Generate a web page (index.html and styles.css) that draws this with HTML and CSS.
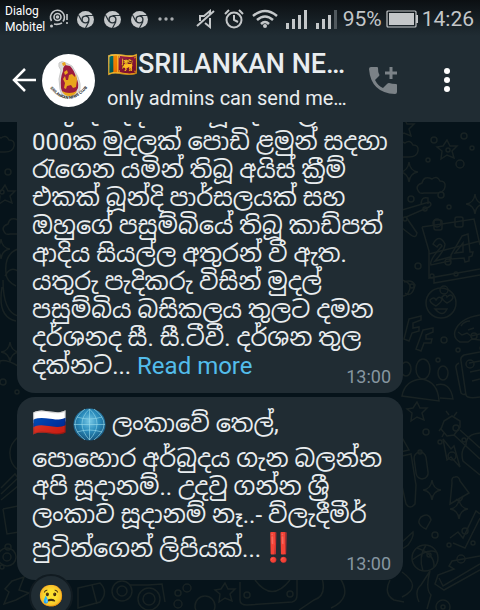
FILE: index.html
```html
<!DOCTYPE html>
<html lang="si">

<head>
  <meta charset="UTF-8" />
  <meta name="viewport" content="width=device-width, initial-scale=1.0" />
  <title>SRILANKAN NEWS</title>
  <link rel="stylesheet" href="styles.css">
</head>

<body>
  <header class="header">
    <div class="status">
      <div class="carrier">Dialog<br>Mobitel</div>
      <div class="notices">
        <svg width="20" height="20" viewBox="0 0 20 20" fill="none" stroke="#c4c7c9" stroke-width="1.600">
          <path d="M2.500 12A7 7 0 1 1 14 12.500M5 15q4 1 8-1" />
          <circle cx="8.500" cy="8" r="3.500" />
          <circle cx="8.500" cy="8" r="1" fill="#c4c7c9" />
          <path d="M18 5v6M18 13v2" />
          <circle cx="2.500" cy="17" r="1.500" fill="#c4c7c9" stroke="none" />
        </svg>
        <svg width="17" height="17" viewBox="0 0 17 17"><use href="#chrome" /></svg>
        <svg width="17" height="17" viewBox="0 0 17 17"><use href="#chrome" /></svg>
        <svg width="17" height="17" viewBox="0 0 17 17"><use href="#chrome" /></svg>
        <svg width="16" height="4" viewBox="0 0 16 4" fill="#a9adb0">
          <circle cx="2" cy="2" r="1.700" /><circle cx="8" cy="2" r="1.700" /><circle cx="14" cy="2" r="1.700" />
        </svg>
      </div>
      <div class="signals">
        <svg width="20" height="20" viewBox="0 0 20 20" fill="none" stroke="#c4c7c9" stroke-width="2">
          <path d="M1 17L18 2M4 12V7h4l6-5v3M14 9v9l-5-4" />
        </svg>
        <svg width="20" height="20" viewBox="0 0 20 20" fill="none" stroke="#c4c7c9" stroke-width="2">
          <circle cx="10" cy="11" r="7.500" />
          <path d="M10 6v5l4 2M1 5l4-4M19 5l-4-4" />
        </svg>
        <svg width="26" height="20" viewBox="0 0 26 20" fill="none" stroke="#c4c7c9" stroke-width="2.500">
          <path d="M1 7q12-10 24 0M5 11q8-7 16 0M9 15q4-4 8 0" />
          <circle cx="13" cy="17" r="2" fill="#c4c7c9" stroke="none" />
        </svg>
        <svg width="22" height="20" viewBox="0 0 22 20" fill="#c4c7c9">
          <path d="M0 14h3v6H0zM6 10h3v10H6zM12 6h3v14h-3zM18 1h3v19h-3z" />
        </svg>
        <svg width="22" height="20" viewBox="0 0 22 20" fill="#c4c7c9">
          <path d="M0 14h3v6H0zM6 10h3v10H6zM12 6h3v14h-3z" />
          <path d="M18 1h3v19h-3z" fill="#50585d" />
        </svg>
      </div>
      <span class="percent">95%</span>
      <svg width="32" height="18" viewBox="0 0 32 18" fill="#c4c7c9">
        <rect x="1" y="1" width="29" height="16" rx="1" fill="none" stroke="#c4c7c9" stroke-width="1.200" />
        <path d="M3 3h25v12H3zM30 5h2v8h-2z" />
      </svg>
      <span class="clock">14:26</span>
    </div>

    <div class="bar">
      <button class="back" aria-label="Back">
        <svg width="24" height="24" viewBox="0 0 24 24" fill="none" stroke="#fff" stroke-width="2.500">
          <path d="M24 12H2M13 1L2 12l11 11" />
        </svg>
      </button>
      <svg class="avatar" width="53" height="53" viewBox="0 0 53 53">
        <circle cx="26.500" cy="26.500" r="26.500" fill="#fff" />
        <path d="M17 9q3-3 7 0l6 3q3 5 6 11 3 7 2 12-3 8-11 8-8 0-9-8l-1-10 2-9q-3-3-2-7z" fill="#dcdcd8" stroke="#c9c9c9" />
        <path d="M23 11l5 1q4 4 6 11 3 6 2 11-3 7-9 7-7 0-8-7-1-10 2-17 0-4 2-6z" fill="#9d1b3d" />
        <path d="M20 9l3-1 1 3-3 1zM22 18l3-2 1 3-3 2zM21 25l2-3 1 4h2l1-5 3-1 3 3 1-3 1 6-1 7-3 1-2-3-4 1-1 3-2-1 1-5zM20 37q7 4 15 0-2 5-8 5-5 0-7-5z" fill="#e9a51c" />
        <path id="arc" d="M8 34Q26 56 45 34" fill="none" />
        <text class="avatar-text"><textPath href="#arc">SRILANKAN NEWS CLUB</textPath></text>
      </svg>
      <div class="group">
        <h1><span class="flag">🇱🇰</span>SRILANKAN NE…</h1>
        <p>only admins can send me…</p>
      </div>
      <button class="call" aria-label="Add call">
        <svg width="29" height="28" viewBox="0 0 29 28">
          <path d="M2 1h6q1 0 1 1 0 4 1 6 1 1 0 2l-4 4q3 6 8 8l4-4q1-1 2-1 3 1 7 1 1 0 1 1v7q0 2-2 2Q2 27 0 3q0-2 2-2z" fill="#7b8287" />
          <path d="M22 1v12M16 7h12" stroke="#7b8287" stroke-width="3" />
        </svg>
      </button>
      <button class="more" aria-label="More options">
        <svg width="6" height="24" viewBox="0 0 6 24" fill="#fff">
          <circle cx="3" cy="3" r="3" /><circle cx="3" cy="12" r="3" /><circle cx="3" cy="21" r="3" />
        </svg>
      </button>
    </div>
  </header>

  <main class="chat">
    <svg class="wallpaper" viewBox="0 0 480 488" preserveAspectRatio="xMidYMid slice" aria-hidden="true">
      <defs>
        <g id="chrome">
          <circle cx="8.500" cy="8.500" r="8.500" fill="#c4c7c9" />
          <path d="M8.500 4.500H16M5 10.500L1.500 4M12 10.500L8.500 17" stroke="#263036" stroke-width="1.200" />
          <circle cx="8.500" cy="8.500" r="3.400" fill="#c4c7c9" stroke="#263036" stroke-width="1.400" />
        </g>
        <path id="star" d="M0-9l3 6 7 0-5 5 2 7-7-3-6 4 1-8-5-4 6-1z" />
        <path id="spark" d="M0-10q1 9 9 10-8 1-9 10-1-9-9-10 8-1 9-10z" />
        <path id="cloud" d="M-12 7q-5-6 3-9 2-8 10-4 5-4 8 2 6 0 5 6-1 6-9 6H-7q-4 1-5-1z" />
        <g id="dots">
          <circle cx="0" cy="0" r="3" /><circle cx="30" cy="-4" r="3" /><circle cx="14" cy="10" r="2" />
          <circle cx="38" cy="8" r="2" /><circle cx="-6" cy="20" r="2" /><circle cx="26" cy="24" r="4" />
        </g>
      </defs>
      <use href="#star" x="447" y="27" /><use href="#star" x="417" y="289" /><use href="#star" x="5" y="72" />
      <use href="#star" x="404" y="5" />
      <use href="#spark" x="409" y="50" /><use href="#spark" x="475" y="82" /><use href="#spark" x="432" y="368" />
      <use href="#spark" x="459" y="387" /><use href="#spark" x="10" y="230" /><use href="#spark" x="1" y="127" />
      <use href="#cloud" x="431" y="63" /><use href="#cloud" x="404" y="27" /><use href="#cloud" x="0" y="22" />
      <use href="#cloud" x="17" y="104" />
      <use href="#dots" x="434" y="18" /><use href="#dots" x="411" y="77" /><use href="#dots" x="418" y="144" />
      <use href="#dots" x="444" y="218" /><use href="#dots" x="426" y="310" /><use href="#dots" x="435" y="413" />
      <use href="#dots" x="8" y="50" /><use href="#dots" x="3" y="260" /><use href="#dots" x="8" y="425" />
      <path d="M402 88l27-8q4 2 0 5l-23 10 11 16q-1 6-6 2l-9-7M421 83q0-9 7-7v6" />
      <path d="M422 105l52-8 6 26M422 105l7 24v27l51-9M429 132l51-13M434 156v5l46-8" />
      <rect x="434" y="98" width="8" height="10" rx="2" /><rect x="455" y="95" width="8" height="10" rx="2" />
      <path d="M433 122q6-11 12 0 0 6-10 17l15-4v4l-19 4q-2-5 11-19-2-4-5 1zM462 114l6-2 2 18 3 0-1 4-3 1v4l-4 1-1-4-13 1v-4zM463 121l-8 10 8-1z" />
      <circle cx="441" cy="181" r="15" />
      <path d="M436 184q-6-3-6-6 4-4 6 0 3-5 6-1 0 3-6 7zM447 181q-5-3-5-6 4-4 5 0 4-4 6 0 0 3-6 6zM435 187h12q-4 9-12 0z" />
      <path d="M402 158q11 3 7 11-2 6-9 5M404 160q8-3 11 3-3 13-10 8" />
      <path d="M409 197l12-3v4l-8 3v5l6-1v4l-7 2-3 8-5-2zM423 208l10-2v4l-7 3v4l6 0-1 4-7 0-3 8-5-2z" />
      <path d="M480 193q-20 3-25 16-2 7 5 11l8 0 4-3 8 1M461 204q3-5 9-5M468 208l6-2M458 210l4 3 5-2 4 3 9-2" />
      <ellipse cx="423" cy="247" rx="7" ry="10" /><ellipse cx="443" cy="251" rx="5" ry="7" /><ellipse cx="406" cy="247" rx="5" ry="7" />
      <path d="M402 274q3-16 20-17 16 3 17 22zM436 263q14-4 17 14l-13-1" />
      <path d="M480 230l-16 3q-4 2-3 6l5 34q1 4 14 2M459 241q-4 2-3 5l5 25q3 3 5 0M469 241l11-2M470 250l10-2M472 259l8-2" />
      <path d="M444 299l8-5 8 5v6l-6 8-7 1-6-7zM454 313l26 24M460 308l20 18M449 293l-3-4M454 294l3-4M442 305l-3 4M444 311l-2 4M480 311q-14 1-14 12-6 6-3 16l17 14" />
      <path d="M443 317l8 10 3-3 6 21-9-10-4 3zM400 312l9 16-9 2" />
      <rect x="415" y="330" width="12" height="27" rx="6" transform="rotate(-8 421 343)" />
      <path d="M402 334l9-2 5 31-1 19q-5 6-9 0l-4-18M450 382l2-21q-1-6 3-6 4-1 5 4l9 12-19 11zM456 377q5 5 7-3" />
      <path d="M426 407q-11-5-5-12 8-5 10 3zM450 416l8-6 5 6 13-27 4 3M453 421l12 5 15-30" />
      <circle cx="425" cy="436" r="13" />
      <path d="M417 426q18 6 17 19M412 438q16-12 24-8M426 423q-8 12-3 26" />
      <path d="M480 434l-28 5-3 5 5 3-16 6-3 9 9 6 36-20M439 456l4 8 37-22M402 450q21 15 0 25M419 480q-5-11 2-17l9-14q-5 18 1 24l-4 14" />
      <circle cx="443" cy="485" r="7" /><circle cx="443" cy="485" r="2" />
      <path d="M402 420l11-10q1 5-5 13l-6 4" />
      <path d="M18 127q-14 5-12 24 0 8 10 13M5 154q5-10 13-5M3 158q0 32 15 36M2 165q-5 30 14 34" />
      <path d="M18 244q-12-7-18-5l-3 16M18 315q-9 8-8 17 0 10 8 16M1 366l14-14 3 4L1 372M1 378l17-14M3 387l15-3M3 387l4 25 12-2" />
      <circle cx="7" cy="435" r="9" /><circle cx="7" cy="435" r="4" />
      <path d="M12 459l12-4-5 13 10 3-13 7-12 4 5-12-4-3zM78 466l22-5q9 9 0 19l-22 6zM92 463l5 19" />
      <circle cx="122" cy="469" r="10" /><circle cx="122" cy="469" r="5" /><circle cx="149" cy="477" r="11" /><circle cx="149" cy="477" r="6" />
      <path d="M130 463l18 0 14-1 3 18" />
      <circle cx="205" cy="484" r="10" /><circle cx="178" cy="471" r="3" /><circle cx="187" cy="466" r="4" /><circle cx="178" cy="482" r="4" />
      <use href="#star" x="225" y="470" />
      <path d="M240 460v18q0 5 7 5l45-3q5-1 5-7v-15M255 458q17 23 35 0" />
      <circle cx="290" cy="472" r="3" /><circle cx="247" cy="473" r="3" />
      <path d="M322 456q5 18-8 22l-15 10M340 456q13 20-9 30M390 458q-7 14 4 20l10 2" />
    </svg>

    <article class="message">
      <p>යතුරු පැදියේ තිබූ රුපියල් 31<br>000ක මුදලක් පොඩි ළමුන් සදහා<br>රැගෙන යමින් තිබූ අයිස් ක්‍රීම්<br>එකක් බූන්දි පාර්සලයක් සහ<br>ඔහුගේ පසුම්බියේ තිබූ කාඩ්පත්<br>ආදිය සියල්ල අතුරන් වී ඇත.<br>යතුරු පැදිකරු විසින් මුදල්<br>පසුම්බිය බසිකලය තුලට දමන<br>දර්ශනද සී. සී.ටීවී. දර්ශන තුල<br>දක්නට... <a href="#">Read more</a></p>
      <time>13:00</time>
    </article>

    <article class="message">
      <p><span class="emoji">🇷🇺</span>
        <svg class="globe" width="33" height="33" viewBox="0 0 33 33" role="img" aria-label="globe">
          <defs>
            <radialGradient id="sea" cx="50%" cy="40%" r="60%">
              <stop offset="0" stop-color="#79c9e6" />
              <stop offset="0.500" stop-color="#2b8dbd" />
              <stop offset="1" stop-color="#16567f" />
            </radialGradient>
          </defs>
          <circle cx="16.500" cy="16.500" r="16" fill="url(#sea)" />
          <path d="M16.500 1v31M1 16.500h31M4 9q12 4 25 0M4 24q12-4 25 0M16.500 1q-15 14 0 31M16.500 1q15 14 0 31M12 1q-20 15 0 31M21 1q20 15 0 31" fill="none" stroke="#9bdcec" stroke-width="0.600" />
        </svg>
        ලංකාවේ තෙල්,<br>පොහොර අර්බුදය ගැන බලන්න<br>අපි සූදානම්.. උදවු ගන්න ශ්‍රී<br>ලංකාව සූදානම් නෑ..- ව්ලැදීමීර්<br>පුටින්ගෙන් ලිපියක්...<span class="marks">‼️</span></p>
      <time>13:00</time>
      <button class="reaction">😢</button>
    </article>
  </main>
</body>

</html>
```
FILE: styles.css
```css
* {
  box-sizing: border-box;
}

body {
  margin: 0;
  height: 100vh;
  display: flex;
  flex-direction: column;
  overflow: hidden;
  background: #06131a;
  color: #e9edef;
  font-family: Roboto, "Noto Sans Sinhala", "Noto Sans", sans-serif;
}

button {
  padding: 0;
  border: none;
  background: none;
  color: inherit;
  cursor: pointer;
}

svg {
  flex: none;
}

.header {
  flex: none;
  background: linear-gradient(#0b0f12, #202c33 36px);
}

.status {
  height: 38px;
  padding: 0 6px 0 5px;
  display: flex;
  align-items: center;
  color: #c4c7c9;
  font-size: 21px;
}

.carrier {
  width: 44px;
  color: #fff;
  font-size: 12px;
  line-height: 16px;
}

.notices {
  display: flex;
  align-items: center;
  gap: 10px;
}

.notices svg:first-child {
  margin-right: -2px;
}

.signals {
  margin-left: auto;
  margin-right: 5px;
  display: flex;
  align-items: center;
  gap: 8px;
}

.percent {
  margin-right: 4px;
}

.clock {
  margin-left: 4px;
}

.bar {
  height: 84px;
  padding: 0 30px 0 12px;
  display: flex;
  align-items: center;
}

.back,
.call,
.more {
  display: flex;
}

.avatar {
  margin: 0 12px 0 6px;
}

.avatar-text {
  fill: #222;
  font-size: 4px;
  font-weight: 700;
}

.group {
  flex: 1;
  min-width: 0;
  white-space: nowrap;
}

.group h1 {
  margin: 0;
  font-size: 27px;
  font-weight: 500;
  line-height: 36px;
}

.group p {
  margin: 0;
  font-size: 20px;
  line-height: 32px;
}

.flag {
  font-size: 25px;
  line-height: 32px;
}

.call {
  margin-right: 46px;
}

.chat {
  flex: 1;
  min-height: 0;
  position: relative;
  display: flex;
  flex-direction: column;
  justify-content: flex-end;
  gap: 4px;
  padding: 0 77px 30px 17px;
  overflow: hidden;
}

.wallpaper {
  position: absolute;
  inset: 0;
  width: 100%;
  height: 100%;
  fill: none;
  stroke: #182223;
  stroke-width: 1.5;
}

.message {
  flex: none;
  position: relative;
  padding: 4px 12px 13px 15px;
  border-radius: 18px;
  background: #202c33;
}

.message p {
  margin: 0;
  font-size: 24px;
  line-height: 28px;
  white-space: nowrap;
}

.message a {
  color: #53bdeb;
  text-decoration: none;
}

.message time {
  position: absolute;
  right: 12px;
  bottom: 6px;
  color: #8696a0;
  font-size: 18px;
}

.emoji {
  font-size: 28px;
  line-height: 44px;
}

.marks {
  font-size: 28px;
  line-height: 38px;
}

.globe {
  margin-bottom: 2px;
  vertical-align: middle;
}

.reaction {
  position: absolute;
  left: 12px;
  bottom: -38px;
  width: 44px;
  height: 44px;
  border: 2px solid #111b21;
  border-radius: 22px;
  background: #202c33;
  font-size: 21px;
}
```
